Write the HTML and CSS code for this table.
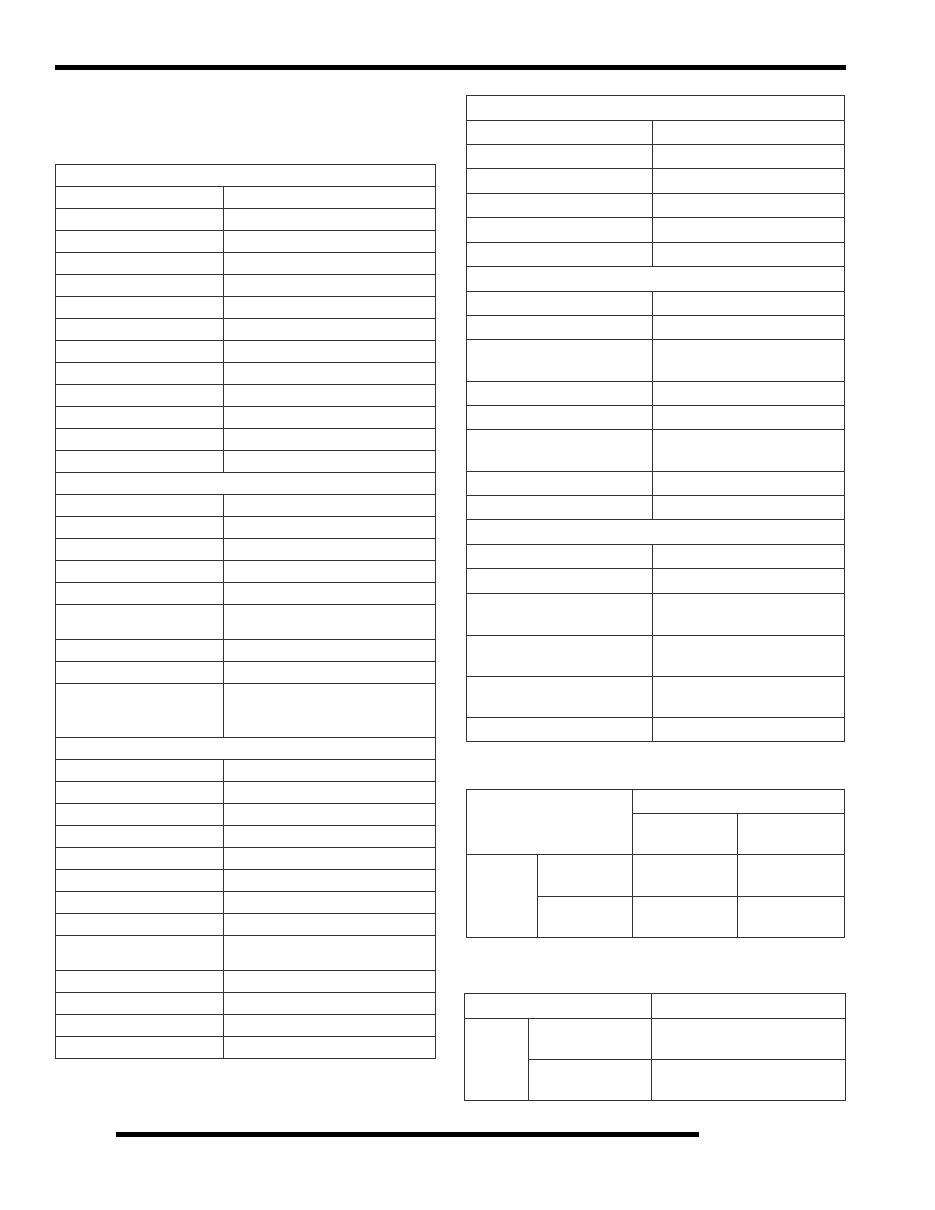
FILE: index.html
```html
<!DOCTYPE html>
<html>
<head>
<meta charset="utf-8">
<link rel="stylesheet" href="styles.css">
</head>
<body>
<div class="page">
  <div class="rule-top"></div>
  <div class="columns">
    <div class="col-left">
      <table class="grid t-left">
        <colgroup><col class="c168"><col></colgroup>
        <tr class="h22"><td colspan="2"></td></tr>
        <tr class="h22"><td></td><td></td></tr>
        <tr class="h22"><td></td><td></td></tr>
        <tr class="h22"><td></td><td></td></tr>
        <tr class="h22"><td></td><td></td></tr>
        <tr class="h22"><td></td><td></td></tr>
        <tr class="h22"><td></td><td></td></tr>
        <tr class="h22"><td></td><td></td></tr>
        <tr class="h22"><td></td><td></td></tr>
        <tr class="h22"><td></td><td></td></tr>
        <tr class="h22"><td></td><td></td></tr>
        <tr class="h22"><td></td><td></td></tr>
        <tr class="h22"><td></td><td></td></tr>
        <tr class="h22"><td></td><td></td></tr>
        <tr class="h22"><td colspan="2"></td></tr>
        <tr class="h22"><td></td><td></td></tr>
        <tr class="h22"><td></td><td></td></tr>
        <tr class="h22"><td></td><td></td></tr>
        <tr class="h22"><td></td><td></td></tr>
        <tr class="h22"><td></td><td></td></tr>
        <tr class="h35"><td></td><td></td></tr>
        <tr class="h22"><td></td><td></td></tr>
        <tr class="h22"><td></td><td></td></tr>
        <tr class="h54"><td></td><td></td></tr>
        <tr class="h22"><td colspan="2"></td></tr>
        <tr class="h22"><td></td><td></td></tr>
        <tr class="h22"><td></td><td></td></tr>
        <tr class="h22"><td></td><td></td></tr>
        <tr class="h22"><td></td><td></td></tr>
        <tr class="h22"><td></td><td></td></tr>
        <tr class="h22"><td></td><td></td></tr>
        <tr class="h22"><td></td><td></td></tr>
        <tr class="h22"><td></td><td></td></tr>
        <tr class="h35"><td></td><td></td></tr>
        <tr class="h22"><td></td><td></td></tr>
        <tr class="h22"><td></td><td></td></tr>
        <tr class="h22"><td></td><td></td></tr>
        <tr class="h22"><td></td><td></td></tr>
      </table>
    </div>
    <div class="col-right">
      <table class="grid t-spec">
        <colgroup><col class="c186"><col></colgroup>
        <tr class="h25"><td colspan="2"></td></tr>
        <tr class="h24"><td></td><td></td></tr>
        <tr class="h24"><td></td><td></td></tr>
        <tr class="h25"><td></td><td></td></tr>
        <tr class="h24"><td></td><td></td></tr>
        <tr class="h25"><td></td><td></td></tr>
        <tr class="h24"><td></td><td></td></tr>
        <tr class="h25"><td colspan="2"></td></tr>
        <tr class="h24"><td></td><td></td></tr>
        <tr class="h24"><td></td><td></td></tr>
        <tr class="h42"><td></td><td></td></tr>
        <tr class="h24"><td></td><td></td></tr>
        <tr class="h24"><td></td><td></td></tr>
        <tr class="h42"><td></td><td></td></tr>
        <tr class="h24"><td></td><td></td></tr>
        <tr class="h24"><td></td><td></td></tr>
        <tr class="h25"><td colspan="2"></td></tr>
        <tr class="h24"><td></td><td></td></tr>
        <tr class="h25"><td></td><td></td></tr>
        <tr class="h42"><td></td><td></td></tr>
        <tr class="h41"><td></td><td></td></tr>
        <tr class="h41"><td></td><td></td></tr>
        <tr class="h24"><td></td><td></td></tr>
      </table>

      <table class="grid t-matrix">
        <colgroup><col class="c71"><col class="c95"><col class="c105"><col></colgroup>
        <tr class="h24"><td colspan="2" rowspan="2"></td><td colspan="2"></td></tr>
        <tr class="h41"><td></td><td></td></tr>
        <tr class="h42"><td rowspan="2"></td><td></td><td></td><td></td></tr>
        <tr class="h41"><td></td><td></td><td></td></tr>
      </table>

      <table class="grid t-small">
        <colgroup><col class="c64"><col class="c123"><col></colgroup>
        <tr class="h25"><td colspan="2"></td><td></td></tr>
        <tr class="h41"><td rowspan="2"></td><td></td><td></td></tr>
        <tr class="h41"><td></td><td></td></tr>
      </table>
    </div>
  </div>
  <div class="rule-bottom"></div>
</div>
</body>
</html>
```

FILE: styles.css
```css
html, body {
  margin: 0;
  padding: 0;
  background: #ffffff;
  font-family: "Liberation Sans", Arial, sans-serif;
}

.page {
  width: 935px;
  height: 1210px;
  padding-top: 65px;
  box-sizing: border-box;
}

.rule-top {
  margin-left: 55px;
  width: 791px;
  height: 5px;
  background: #000;
}

.columns {
  display: flex;
  align-items: flex-start;
  margin-left: 55px;
  gap: 30px;
}

.col-left {
  width: 381px;
  padding-top: 94px;
}

.col-right {
  width: 379px;
  padding-top: 25px;
  display: flex;
  flex-direction: column;
}

.grid {
  border-collapse: collapse;
  table-layout: fixed;
}

.grid td {
  border: 1px solid #333;
  padding: 0;
}

.t-left { width: 381px; }
.t-spec { width: 379px; }
.t-matrix { width: 379px; margin-top: 47px; }
.t-small { width: 382px; margin: 55px 0 0 -2px; }

.c168 { width: 168px; }
.c186 { width: 186px; }
.c71 { width: 71px; }
.c95 { width: 95px; }
.c105 { width: 105px; }
.c64 { width: 64px; }
.c123 { width: 123px; }

.h22 { height: 22px; }
.h24 { height: 24px; }
.h25 { height: 25px; }
.h35 { height: 35px; }
.h41 { height: 41px; }
.h42 { height: 42px; }
.h54 { height: 54px; }

.rule-bottom {
  margin-left: 116px;
  margin-top: 31px;
  width: 583px;
  height: 5px;
  background: #000;
}
```
